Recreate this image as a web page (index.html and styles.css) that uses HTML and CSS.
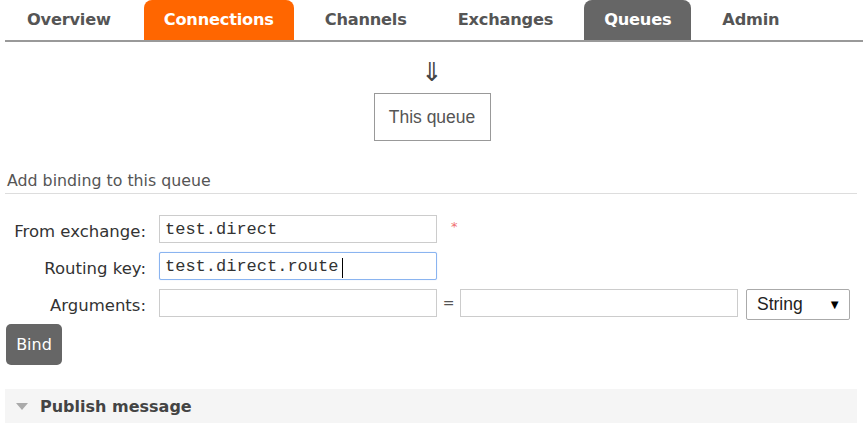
FILE: index.html
```html
<!DOCTYPE html>
<html>
<head>
<meta charset="utf-8">
<link rel="stylesheet" href="styles.css">
</head>
<body>
<nav class="tabs">
  <a class="tab">Overview</a>
  <a class="tab tab-orange">Connections</a>
  <a class="tab">Channels</a>
  <a class="tab">Exchanges</a>
  <a class="tab tab-active">Queues</a>
  <a class="tab">Admin</a>
</nav>
<div class="flow">
  <div class="arrow">⇓</div>
  <div class="queue-box">This queue</div>
</div>
<h3 class="section-title">Add binding to this queue</h3>
<form class="binding-form">
  <label class="lbl">From exchange:</label>
  <div class="field-line">
    <input class="txt" type="text" value="test.direct">
    <span class="req">*</span>
  </div>
  <label class="lbl">Routing key:</label>
  <div class="field-line">
    <input class="txt txt-focus" type="text" value="test.direct.route"><span class="caret"></span>
  </div>
  <label class="lbl">Arguments:</label>
  <div class="field-line">
    <input class="txt" type="text" value="">
    <span class="eq">=</span>
    <input class="txt" type="text" value="">
    <div class="select"><span>String</span><span class="sel-arrow">▼</span></div>
  </div>
</form>
<button class="bind-btn">Bind</button>
<div class="publish">
  <span class="tri"></span>
  <span class="publish-title">Publish message</span>
</div>
</body>
</html>
```
FILE: styles.css
```css
* { box-sizing: border-box; }
body {
  margin: 0;
  font-family: "DejaVu Sans", Verdana, sans-serif;
  color: #333;
  background: #fff;
  width: 863px;
  height: 431px;
  overflow: hidden;
}
.tabs {
  display: flex;
  margin-left: 5px;
  padding-left: 2px;
  border-bottom: 2px solid #999;
  height: 42px;
  gap: 11px;
}
.tab {
  display: flex;
  align-items: center;
  height: 40px;
  padding: 0 20px 2px;
  font-weight: bold;
  font-size: 16.2px;
  color: #555;
  border-radius: 8px 8px 0 0;
  letter-spacing: -0.2px;
}
.tab:first-child { margin-right: 2px; }
.tab-orange { background: #ff6600; color: #fff; }
.tab-active { background: #666; color: #fff; }
.flow {
  display: flex;
  flex-direction: column;
  align-items: center;
}
.arrow {
  margin-top: 16px;
  font-size: 26px;
  line-height: 28px;
  color: #444;
  margin-left: 1px;
}
.queue-box {
  margin-top: 7px;
  width: 117px;
  height: 48px;
  border: 1px solid #999;
  display: flex;
  align-items: center;
  justify-content: center;
  font-family: "Liberation Sans", Arial, sans-serif;
  font-size: 17.5px;
  color: #555;
  margin-left: 1px;
}
.section-title {
  margin: 30px 6px 0 5px;
  padding: 0 0 3px 2px;
  font-weight: normal;
  font-size: 15.8px;
  color: #555;
  border-bottom: 1px solid #ddd;
}
.binding-form {
  display: grid;
  grid-template-columns: 146px 1fr;
  column-gap: 13px;
  row-gap: 9px;
  margin-top: 21px;
}
.lbl {
  text-align: right;
  font-size: 16.5px;
  color: #333;
  display: flex;
  align-items: center;
  justify-content: flex-end;
  padding-top: 4px;
  white-space: nowrap;
}
.field-line {
  display: flex;
  align-items: center;
  height: 28px;
}
.txt {
  width: 278px;
  height: 28px;
  border: 1px solid #ccc;
  padding: 0 5px;
  font-family: "Liberation Mono", "Courier New", monospace;
  font-size: 17px;
  color: #333;
  outline: none;
}
.txt-focus {
  border: 1.5px solid #8ab4f0;
  border-radius: 2px;
  box-shadow: 0 0 1px #a8c8f8;
}
.caret {
  position: absolute;
  left: 342px;
  top: 258px;
  width: 1px;
  height: 20px;
  background: #000;
}
.req {
  color: #f07070;
  font-size: 13px;
  margin-left: 14px;
  margin-top: -6px;
}
.eq {
  width: 23px;
  text-align: center;
  font-size: 14px;
  color: #555;
}
.select {
  margin-left: 8px;
  width: 104px;
  height: 31px;
  margin-top: 3px;
  border: 1px solid #aaa;
  border-radius: 2px;
  display: flex;
  align-items: center;
  justify-content: space-between;
  padding: 0 8px 0 10px;
  font-family: "Liberation Sans", Arial, sans-serif;
  font-size: 17.5px;
  color: #222;
}
.sel-arrow { font-size: 13px; color: #000; }
.bind-btn {
  display: block;
  margin: 7px 0 0 6px;
  width: 56px;
  height: 41px;
  background: #666;
  color: #fff;
  border: none;
  border-radius: 5px;
  font-family: "DejaVu Sans", Verdana, sans-serif;
  font-size: 16px;
}
.publish {
  margin: 24px 6px 0 5px;
  height: 34px;
  background: #f5f5f5;
  display: flex;
  align-items: center;
  padding-left: 11px;
}
.tri {
  width: 0;
  height: 0;
  border-left: 6px solid transparent;
  border-right: 6px solid transparent;
  border-top: 7px solid #aaa;
  margin-right: 12px;
}
.publish-title {
  font-weight: bold;
  font-size: 16px;
  color: #444;
}
```
